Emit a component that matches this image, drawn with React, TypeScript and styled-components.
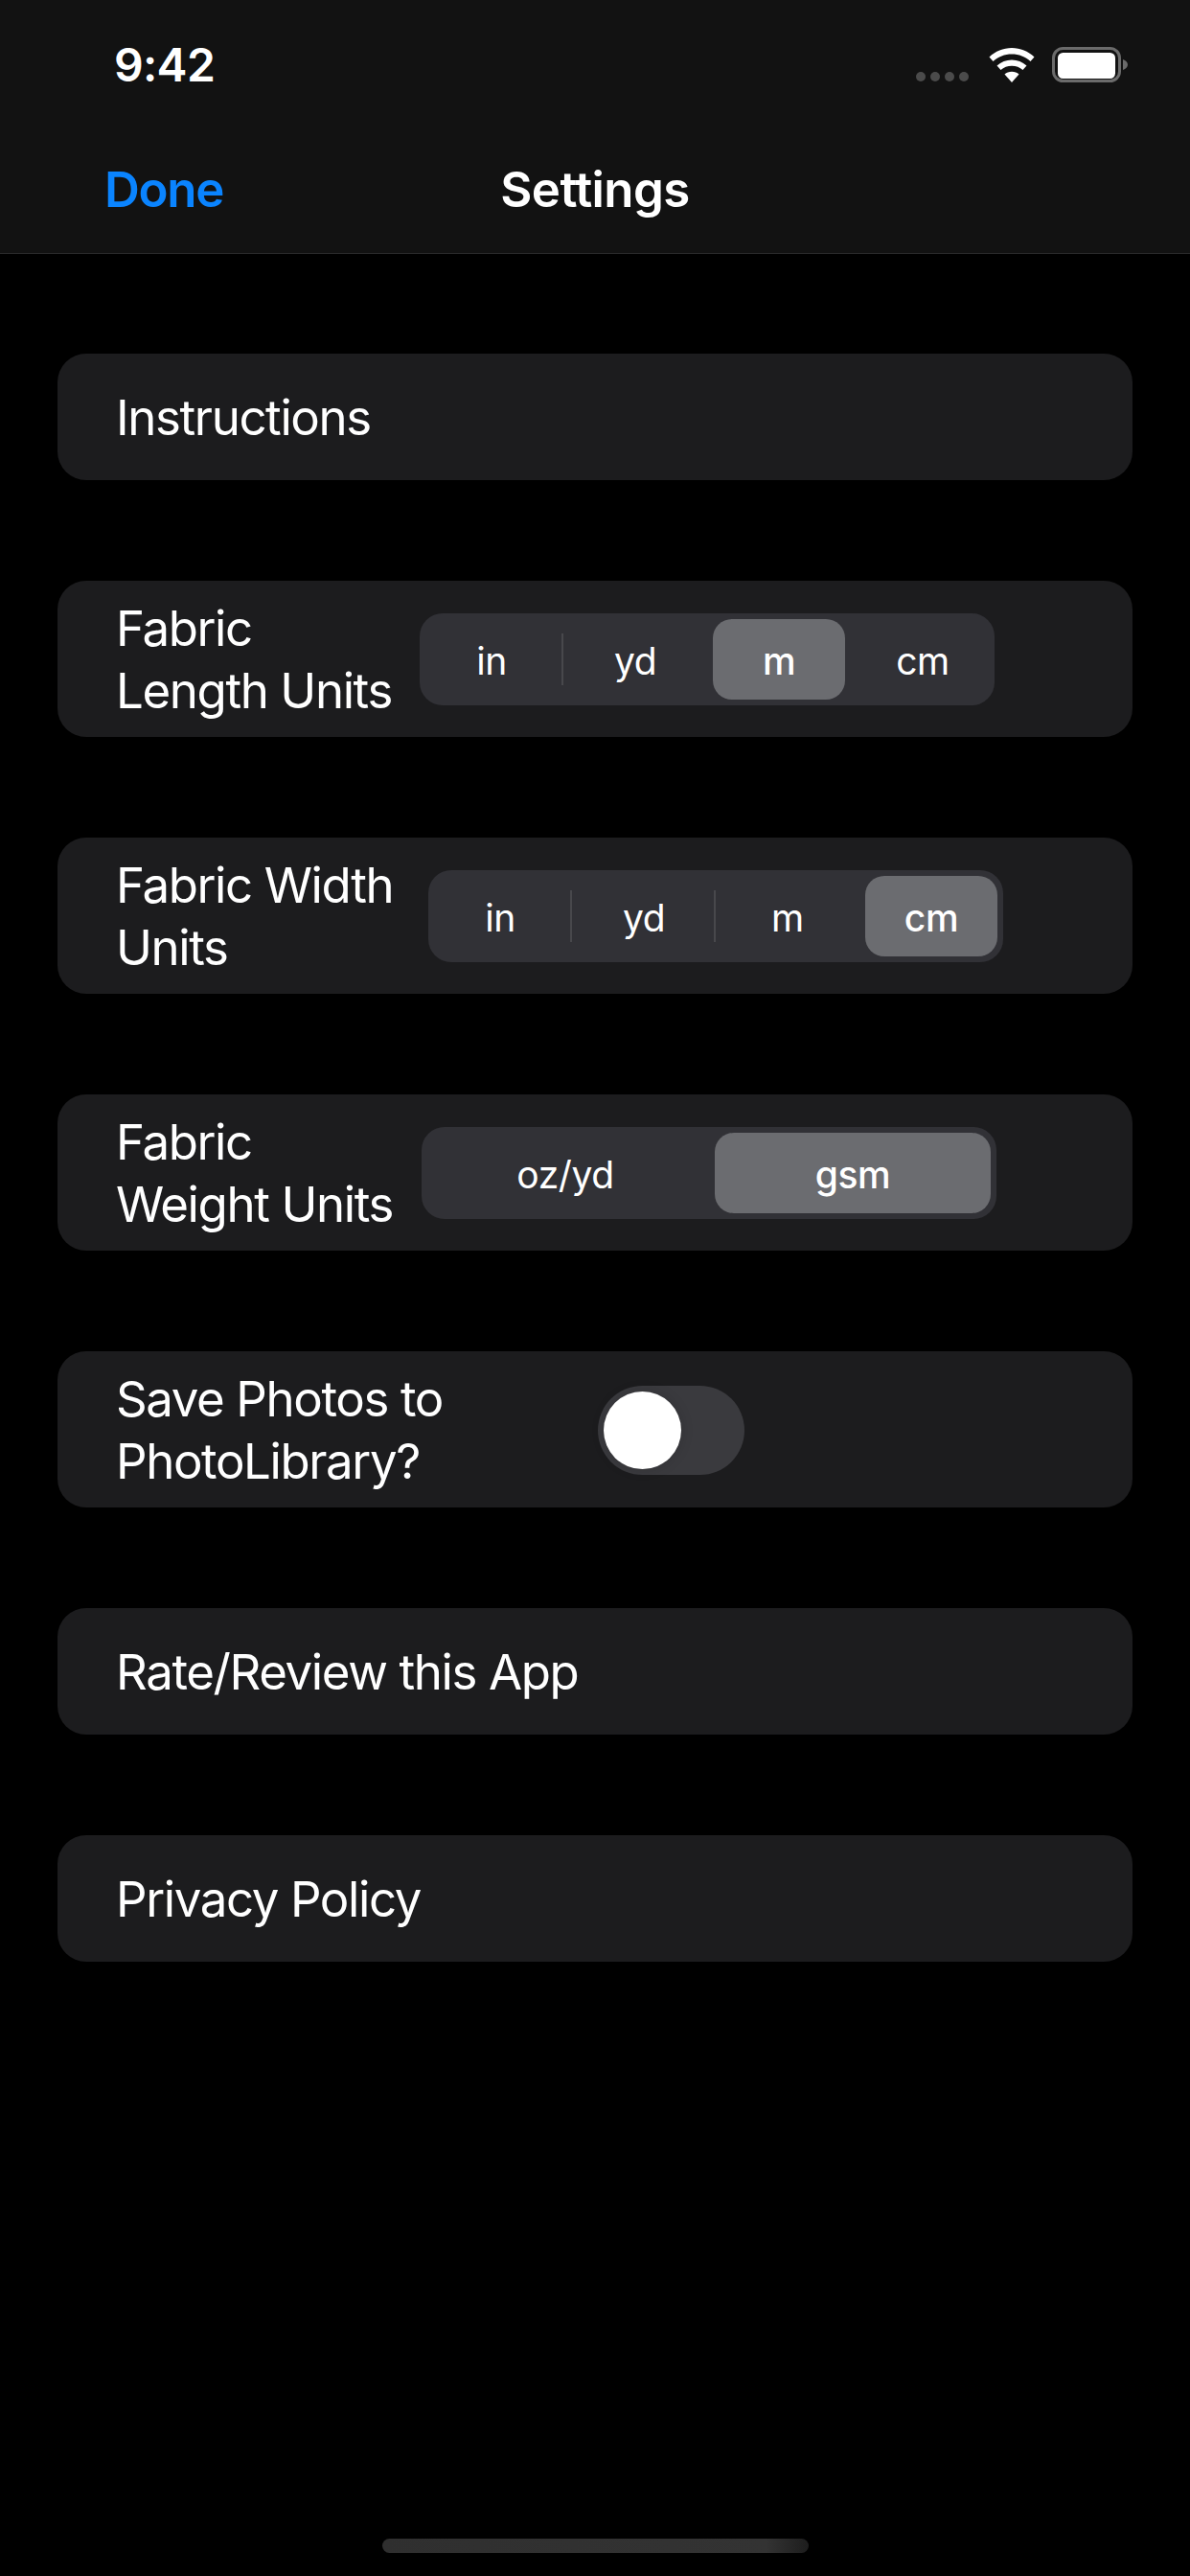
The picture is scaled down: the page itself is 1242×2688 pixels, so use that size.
import React from "react";
import styled, { createGlobalStyle } from "styled-components";

const Global = createGlobalStyle`
  html, body { margin: 0; padding: 0; background: #000; }
  body { font-family: Inter, "Liberation Sans", sans-serif; color: #fff; -webkit-font-smoothing: antialiased; }
`;

const Page = styled.div`
  position: relative;
  width: 1242px;
  height: 2688px;
  display: flex;
  flex-direction: column;
  background: #000;
  overflow: hidden;
`;

const Header = styled.header`
  height: 265px;
  box-sizing: border-box;
  flex: none;
  background: #121212;
  border-bottom: 1px solid #2a2a2b;
  display: flex;
  flex-direction: column;
`;

const StatusBar = styled.div`
  height: 132px;
  display: flex;
  align-items: flex-start;
  padding: 43px 64px 0 119px;
  box-sizing: border-box;
`;

const Clock = styled.span`
  font-size: 48px;
  line-height: 50px;
  font-weight: 600;
  letter-spacing: -0.7px;
`;

const StatusIcons = styled.div`
  margin-left: auto;
  display: flex;
  align-items: flex-start;
  padding-top: 6px;
`;

const NavBar = styled.div`
  position: relative;
  height: 132px;
  display: flex;
  align-items: center;
  justify-content: center;
`;

const Done = styled.span`
  position: absolute;
  left: 109px;
  top: 35px;
  font-size: 51px;
  line-height: 62px;
  font-weight: 600;
  letter-spacing: -1.3px;
  color: #0a84ff;
`;

const Title = styled.h1`
  margin: 0;
  font-size: 51px;
  line-height: 62px;
  font-weight: 600;
  letter-spacing: -0.6px;
`;

const List = styled.main`
  display: flex;
  flex-direction: column;
  gap: 105px;
  padding: 104px 60px 0 60px;
`;

const Card = styled.section<{ $tall?: boolean }>`
  height: ${(p) => (p.$tall ? 163 : 132)}px;
  box-sizing: border-box;
  background: #1c1c1e;
  border-radius: 30px;
  display: flex;
  align-items: center;
  padding-left: 61px;
`;

const Label = styled.div<{ $width?: number }>`
  flex: none;
  width: ${(p) => (p.$width ? `${p.$width}px` : "auto")};
  font-size: 51px;
  line-height: 65px;
  font-weight: 400;
  letter-spacing: -1.4px;
  white-space: pre-line;
  padding-top: 1px;
`;

const Segmented = styled.div<{ $columns: number }>`
  flex: none;
  width: 600px;
  height: 96px;
  margin-top: 1px;
  display: grid;
  grid-template-columns: repeat(${(p) => p.$columns}, 1fr);
  background: #313136;
  border-radius: 24px;
`;

const Segment = styled.div<{ $divider?: boolean }>`
  position: relative;
  display: flex;
  padding: 6px;
  &::after {
    content: "";
    display: ${(p) => (p.$divider ? "block" : "none")};
    position: absolute;
    right: 0;
    top: 21px;
    width: 2px;
    height: 54px;
    background: #48484c;
  }
`;

const SegmentLabel = styled.div<{ $selected?: boolean }>`
  flex: 1;
  display: flex;
  align-items: center;
  justify-content: center;
  padding-top: 2px;
  border-radius: 20px;
  font-size: 39px;
  letter-spacing: -0.4px;
  font-weight: ${(p) => (p.$selected ? 500 : 400)};
  background: ${(p) => (p.$selected ? "#6b6c70" : "transparent")};
`;

const Switch = styled.div`
  flex: none;
  width: 153px;
  height: 93px;
  margin-top: 1px;
  box-sizing: border-box;
  padding: 6px;
  border-radius: 47px;
  background: #3a3a3e;
`;

const Knob = styled.div`
  width: 81px;
  height: 81px;
  border-radius: 50%;
  background: #fff;
  box-shadow: 0 0 14px rgba(0, 0, 0, 0.14);
`;

const HomeBar = styled.div`
  position: absolute;
  left: 399px;
  top: 2649px;
  width: 445px;
  height: 15px;
  border-radius: 8px;
  background: linear-gradient(90deg, #2f2f2f, #333 90%, #1d1d1d);
`;

const Dots = () => (
  <svg width="56" height="50" viewBox="0 0 56 50" style={{ marginRight: 20 }}>
    {[5, 20, 35, 50].map((x) => (
      <circle key={x} cx={x} cy="31" r="5" fill="#4b4b4b" />
    ))}
  </svg>
);

const Wifi = () => (
  <svg width="48" height="38" viewBox="0 0 48 38" style={{ marginRight: 18 }}>
    <path d="M24 1C15 1 7 4.500 0.500 10.500L4.500 15C10 10 16.500 7.500 24 7.500C31.500 7.500 38 10 43.500 15L47.500 10.500C41 4.500 33 1 24 1Z" fill="#fff" />
    <path d="M24 13.500C18 13.500 13 15.700 8.500 19.500L12.500 24C15.700 21.300 19.500 19.800 24 19.800C28.500 19.800 32.300 21.300 35.500 24L39.500 19.500C35 15.700 30 13.500 24 13.500Z" fill="#fff" />
    <path d="M24 25.800C21 25.800 18.500 26.800 16.500 28.500L24 37L31.500 28.500C29.500 26.800 27 25.800 24 25.800Z" fill="#fff" />
  </svg>
);

const Battery = () => (
  <svg width="80" height="38" viewBox="0 0 80 38">
    <rect x="1.500" y="1.500" width="69" height="34" rx="10" fill="none" stroke="#6b6b6b" strokeWidth="3" />
    <rect x="6" y="6" width="60" height="27" rx="5.500" fill="#fff" />
    <path d="M74 13C77 14 79 16 79 18.500C79 21 77 23 74 24Z" fill="#6b6b6b" />
  </svg>
);

type SegProps = { options: string[]; selected: number; dividers: number[] };
const Seg = ({ options, selected, dividers }: SegProps) => (
  <Segmented $columns={options.length}>
    {options.map((o, i) => (
      <Segment key={o} $divider={dividers.includes(i)}>
        <SegmentLabel $selected={i === selected}>{o}</SegmentLabel>
      </Segment>
    ))}
  </Segmented>
);

export default function App() {
  const units = ["in", "yd", "m", "cm"];
  return (
    <Page>
      <Global />
      <Header>
        <StatusBar>
          <Clock>9:42</Clock>
          <StatusIcons>
            <Dots />
            <Wifi />
            <Battery />
          </StatusIcons>
        </StatusBar>
        <NavBar>
          <Done>Done</Done>
          <Title>Settings</Title>
        </NavBar>
      </Header>
      <List>
        <Card>
          <Label>Instructions</Label>
        </Card>
        <Card $tall>
          <Label $width={317}>{"Fabric\nLength Units"}</Label>
          <Seg options={units} selected={2} dividers={[0]} />
        </Card>
        <Card $tall>
          <Label $width={326}>{"Fabric Width\nUnits"}</Label>
          <Seg options={units} selected={3} dividers={[0, 1]} />
        </Card>
        <Card $tall>
          <Label $width={319}>{"Fabric\nWeight Units"}</Label>
          <Seg options={["oz/yd", "gsm"]} selected={1} dividers={[]} />
        </Card>
        <Card $tall>
          <Label $width={503}>{"Save Photos to\nPhotoLibrary?"}</Label>
          <Switch>
            <Knob />
          </Switch>
        </Card>
        <Card>
          <Label>Rate/Review this App</Label>
        </Card>
        <Card>
          <Label>Privacy Policy</Label>
        </Card>
      </List>
      <HomeBar />
    </Page>
  );
}
